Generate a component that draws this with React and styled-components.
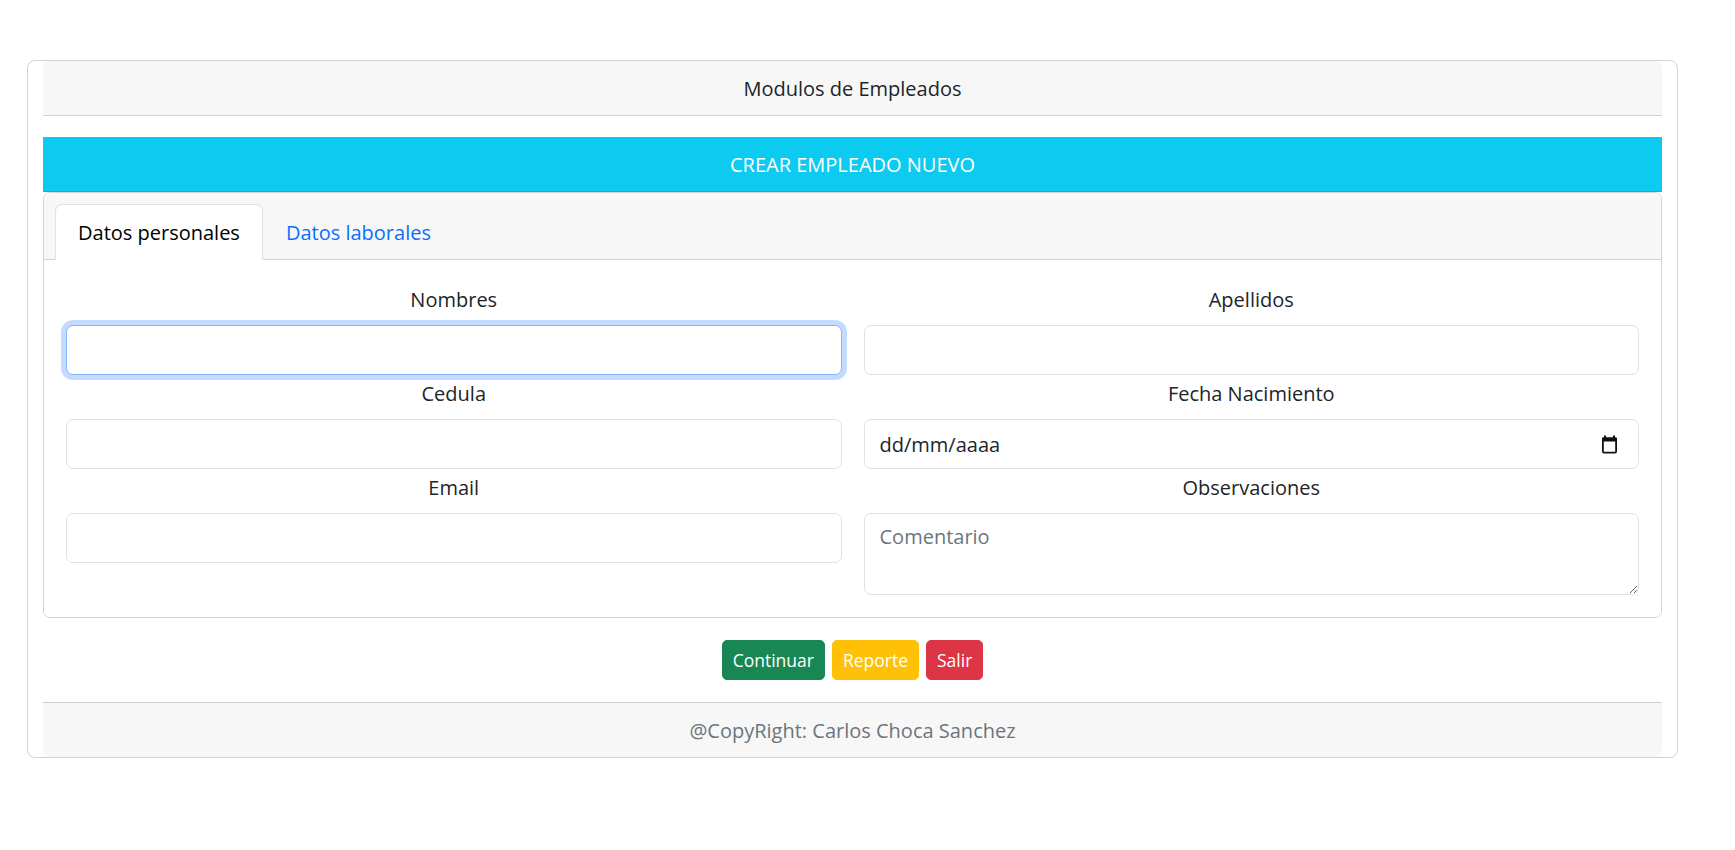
import React, { useState } from "react";
import styled, { createGlobalStyle, css } from "styled-components";

const GlobalStyle = createGlobalStyle`
  * {
    box-sizing: border-box;
  }
  body {
    margin: 0;
    background: #ffffff;
    color: #212529;
    font-family: "Open Sans", "Noto Sans", sans-serif;
    font-size: 20px;
  }
`;

const fields = [
  { label: "Nombres", type: "text", focus: true },
  { label: "Apellidos", type: "text" },
  { label: "Cedula", type: "text" },
  { label: "Fecha Nacimiento", type: "date" },
  { label: "Email", type: "email" },
  { label: "Observaciones", type: "textarea", placeholder: "Comentario" },
];

const CalendarIcon = () => (
  <svg width="17" height="19" viewBox="0 0 17 19" aria-hidden="true">
    <rect x="3" y="0.5" width="2" height="3" fill="#111" />
    <rect x="12" y="0.5" width="2" height="3" fill="#111" />
    <rect x="1" y="2.5" width="15" height="4" rx="1" fill="#111" />
    <rect x="1.9" y="3.4" width="13.2" height="14.2" rx="1" fill="none" stroke="#111" strokeWidth="1.8" />
  </svg>
);

const App = () => {
  const [tab, setTab] = useState("personales");

  const renderControl = (f) => {
    if (f.type === "textarea") return <TextArea placeholder={f.placeholder} />;
    if (f.type === "date")
      return (
        <DateBox>
          <span>dd/mm/aaaa</span>
          <CalendarIcon />
        </DateBox>
      );
    return <Input type={f.type} $focused={f.focus} autoFocus={f.focus} />;
  };

  return (
    <Page>
      <GlobalStyle />
      <Panel>
        <PanelHeader>Modulos de Empleados</PanelHeader>
        <Banner>CREAR EMPLEADO NUEVO</Banner>
        <TabCard>
          <TabBar>
            <Tab $active={tab === "personales"} onClick={() => setTab("personales")}>
              Datos personales
            </Tab>
            <Tab $active={tab === "laborales"} onClick={() => setTab("laborales")}>
              Datos laborales
            </Tab>
          </TabBar>
          <FormGrid>
            {fields.map((f) => (
              <Field key={f.label}>
                <Label>{f.label}</Label>
                {renderControl(f)}
              </Field>
            ))}
          </FormGrid>
        </TabCard>
        <Actions>
          <Button $bg="#198754">Continuar</Button>
          <Button $bg="#ffc107">Reporte</Button>
          <Button $bg="#dc3545">Salir</Button>
        </Actions>
        <Footer>@CopyRight: Carlos Choca Sanchez</Footer>
      </Panel>
    </Page>
  );
};

const Page = styled.div`
  padding: 60px 0 0 27px;
`;

const Panel = styled.div`
  width: 1651px;
  border: 1px solid #d3d3d3;
  border-radius: 8px;
  padding: 0 15px;
`;

const PanelHeader = styled.div`
  height: 55px;
  display: flex;
  align-items: center;
  justify-content: center;
  background: #f7f7f7;
  border-bottom: 1px solid #d0d0d0;
  border-radius: 7px 7px 0 0;
  color: #212529;
`;

const Banner = styled.div`
  margin-top: 21px;
  height: 55px;
  display: flex;
  align-items: center;
  justify-content: center;
  background: #0dcaf0;
  border-bottom: 1px solid #0bb3d6;
  color: #ffffff;
`;

const TabCard = styled.div`
  border: 1px solid #d3d3d3;
  border-radius: 7px;
  overflow: hidden;
`;

const TabBar = styled.div`
  display: flex;
  padding: 11px 11px 0;
  background: #f7f7f7;
  border-bottom: 1px solid #d3d3d3;
`;

const Tab = styled.div`
  height: 56px;
  margin-bottom: -1px;
  padding: 0 22px;
  display: flex;
  align-items: center;
  border: 1px solid transparent;
  border-radius: 7px 7px 0 0;
  color: #0d6efd;
  cursor: pointer;

  ${(p) =>
    p.$active &&
    css`
      background: #ffffff;
      color: #000000;
      border-color: #dee2e6 #dee2e6 #ffffff;
    `}
`;

const FormGrid = styled.div`
  display: grid;
  grid-template-columns: 1fr 1fr;
  column-gap: 22px;
  padding: 21px 22px 22px;
  background: #ffffff;
`;

const Field = styled.div`
  display: flex;
  flex-direction: column;
`;

const Label = styled.label`
  padding-top: 4px;
  margin-bottom: 10px;
  line-height: 30px;
  text-align: center;
  color: #212529;
`;

const controlBase = css`
  width: 100%;
  border: 1px solid #dee2e6;
  border-radius: 7px;
  background: #ffffff;
  color: #212529;
  font-family: inherit;
  font-size: 20px;
  padding: 0 15px;
  outline: none;
`;

const Input = styled.input`
  ${controlBase};
  height: 50px;
  caret-color: #212529;

  ${(p) =>
    p.$focused &&
    css`
      border-color: #86b7fe;
      box-shadow: 0 0 0 5px rgba(13, 110, 253, 0.25);
    `}

  &:focus {
    border-color: #86b7fe;
    box-shadow: 0 0 0 5px rgba(13, 110, 253, 0.25);
  }
`;

const DateBox = styled.div`
  ${controlBase};
  height: 50px;
  display: flex;
  align-items: center;
  justify-content: space-between;
  padding-right: 20px;
`;

const TextArea = styled.textarea`
  ${controlBase};
  height: 82px;
  padding: 8px 15px;
  line-height: 1.5;

  &::placeholder {
    color: #6c757d;
  }
`;

const Actions = styled.div`
  display: flex;
  justify-content: center;
  gap: 7px;
  padding: 22px 0;
`;

const Button = styled.button`
  height: 40px;
  padding: 0 10px;
  border: 1px solid ${(p) => p.$bg};
  border-radius: 5px;
  background: ${(p) => p.$bg};
  color: #ffffff;
  font-family: inherit;
  font-size: 17.5px;
  cursor: pointer;
`;

const Footer = styled.div`
  height: 55px;
  display: flex;
  align-items: center;
  justify-content: center;
  background: #f7f7f7;
  border-top: 1px solid #d0d0d0;
  border-radius: 0 0 7px 7px;
  color: #6c757d;
`;

export default App;
